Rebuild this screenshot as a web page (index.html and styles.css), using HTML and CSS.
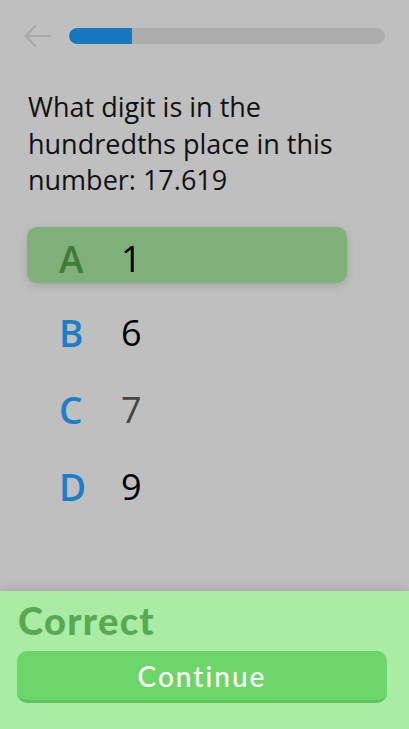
FILE: index.html
```html
<!DOCTYPE html>
<html>
<head>
<meta charset="utf-8">
<link rel="stylesheet" href="styles.css">
</head>
<body>
<div class="screen">
  <header class="top">
    <svg class="back" width="28" height="22" viewBox="0 0 28 22">
      <path d="M26 11H1.5M11.5 1L1.5 11l10 10" fill="none" stroke="#a9a9a9" stroke-width="2.2" stroke-linecap="round" stroke-linejoin="round"/>
    </svg>
    <div class="track"><div class="fill" style="width:20%"></div></div>
  </header>
  <p class="question">What digit is in the hundredths place in this number: 17.619</p>
  <ul class="options">
    <li class="opt selected"><span class="key">A</span><span class="val">1</span></li>
    <li class="opt"><span class="key">B</span><span class="val">6</span></li>
    <li class="opt"><span class="key">C</span><span class="val dim">7</span></li>
    <li class="opt"><span class="key">D</span><span class="val">9</span></li>
  </ul>
</div>
<footer class="result">
  <div class="title">Correct</div>
  <button class="cta">Continue</button>
</footer>
</body>
</html>
```

FILE: styles.css
```css
* { box-sizing: border-box; }
html, body { margin: 0; padding: 0; }
body {
  width: 409px;
  height: 729px;
  background: #bfbfbf;
  font-family: "Open Sans", sans-serif;
  display: flex;
  flex-direction: column;
  overflow: hidden;
}
.screen {
  flex: 1;
  padding: 25px 24px 0 24px;
}
.top {
  display: flex;
  align-items: center;
  gap: 17px;
  height: 22px;
}
.back { display: block; flex: none; }
.track {
  flex: 1;
  height: 16px;
  border-radius: 8px;
  background: #adadad;
  overflow: hidden;
}
.fill {
  height: 100%;
  background: #1577be;
  border-radius: 8px 0 0 8px;
}
.question {
  margin: 42px 0 0 4px;
  font-size: 27px;
  line-height: 36.5px;
  color: #111;
  width: 340px;
}
.options {
  list-style: none;
  margin: 28px 0 0 3px;
  padding: 0;
  width: 320px;
  display: flex;
  flex-direction: column;
  gap: 22px;
}
.opt {
  height: 55px;
  display: flex;
  align-items: center;
  padding-left: 32px;
  border-radius: 10px;
}
.opt.selected {
  height: 56px;
  padding-top: 7px;
  background: #80b07a;
  box-shadow: 0 3px 8px rgba(0,0,0,0.14);
}
.key {
  width: 62px;
  font-size: 37px;
  font-weight: 600;
  color: #1a7fc7;
}
.selected .key { color: #3f7b39; }
.val {
  font-size: 36px;
  color: #000;
}
.val.dim { color: #454545; }
.result {
  height: 138px;
  background: #abeca5;
  box-shadow: 0 -3px 10px rgba(0,0,0,0.12);
  padding: 6px 22px 0 17px;
}
.title {
  font-family: "Lato", sans-serif;
  font-weight: 900;
  font-size: 38px;
  letter-spacing: 1.3px;
  line-height: 46px;
  color: #59a854;
  padding-left: 1px;
}
.cta {
  display: block;
  width: 100%;
  margin-top: 8px;
  height: 52px;
  border: none;
  border-bottom: 3px solid #5ec55a;
  border-radius: 10px;
  background: #6dd66a;
  color: #fff;
  font-family: "Lato", sans-serif;
  font-size: 28px;
  letter-spacing: 2px;
  font-weight: 500;
  padding: 0;
}
```
